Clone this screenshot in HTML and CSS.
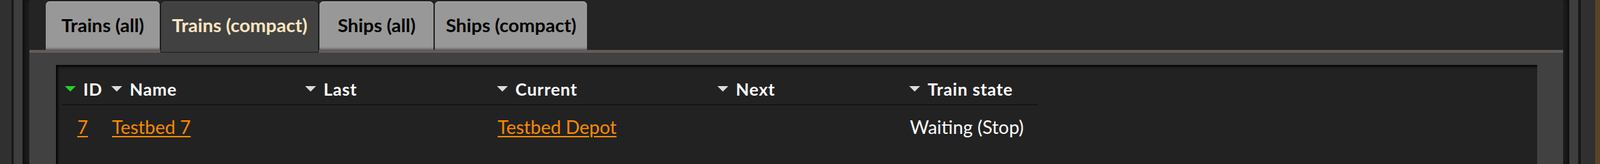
FILE: index.html
```html
<!DOCTYPE html>
<html lang="en">
<head>
<meta charset="utf-8">
<title>Trains (compact)</title>
<link rel="stylesheet" href="styles.css">
</head>
<body>
<div class="window">
  <div class="rail">
    <div class="content">
      <div class="pane">
        <div class="tabs">
          <div class="tab">Trains (all)</div>
          <div class="tab tab-active">Trains (compact)</div>
          <div class="tab">Ships (all)</div>
          <div class="tab">Ships (compact)</div>
        </div>
        <div class="panel">
          <div class="inner">
            <div class="table">
              <div class="th"><span class="arrow arrow-green"></span>ID</div>
              <div class="th"><span class="arrow"></span>Name</div>
              <div class="th"><span class="arrow"></span>Last</div>
              <div class="th"><span class="arrow"></span>Current</div>
              <div class="th"><span class="arrow"></span>Next</div>
              <div class="th"><span class="arrow"></span>Train state</div>

              <div class="td td-id"><a class="link" href="#">7</a></div>
              <div class="td"><a class="link" href="#">Testbed 7</a></div>
              <div class="td"></div>
              <div class="td"><a class="link" href="#">Testbed Depot</a></div>
              <div class="td"></div>
              <div class="td">Waiting (Stop)</div>
            </div>
          </div>
        </div>
      </div>
    </div>
  </div>
</div>
</body>
</html>
```
FILE: styles.css
```css
html, body {
  margin: 0;
  padding: 0;
  height: 100%;
  overflow: hidden;
  background: #303030;
}

.window {
  box-sizing: border-box;
  width: 2344px;
  height: 100%;
  min-height: 216px;
  display: flex;
  overflow: hidden;
  padding-left: 17px;
  padding-right: 21px;
  background: #303030;
  border-right: 7px solid #5a4326;
}

.rail {
  flex: 1;
  display: flex;
  padding: 0 13px;
  background: #3e3e3e;
  border-left: 3px solid #1b1714;
  border-right: 4px solid #1b1714;
}

.content {
  flex: 1;
  display: flex;
  padding: 0 9px 0 10px;
  background: #1d1d1d;
  box-shadow: inset 5px 0 5px -2px #0e0e0e, inset -5px 0 5px -2px #0e0e0e;
}

.pane {
  flex: 1;
  display: flex;
  flex-direction: column;
  background: #242424;
}

.tabs {
  box-sizing: border-box;
  height: 73px;
  flex: none;
  display: flex;
  align-items: flex-end;
  gap: 2px;
  padding-left: 24px;
}

.tab {
  box-sizing: border-box;
  height: 71px;
  min-width: 167px;
  padding: 0 16px 2px;
  display: flex;
  align-items: center;
  justify-content: center;
  font-family: Lato, "Liberation Sans", sans-serif;
  font-weight: 700;
  font-size: 27.5px;
  white-space: nowrap;
  color: #000;
  background: #989898;
  border-radius: 6px 6px 0 0;
  box-shadow: inset 0 1px 0 #b3b3b3, inset 0 -4px 3px -2px rgba(0, 0, 0, 0.35);
}

.tab-active {
  position: relative;
  z-index: 1;
  height: 74px;
  margin-bottom: -3px;
  padding-bottom: 5px;
  color: #ffe6c0;
  background: #414141;
  box-shadow: inset 0 1px 0 #4f4f4f, 0 0 0 1px #1c1c1c;
}

.panel {
  flex: 1;
  display: flex;
  padding: 19px 38px 0 39px;
  background: #414141;
  border-top: 3px solid #605a57;
  box-shadow: inset 0 1px 0 #6c6562;
}

.inner {
  flex: 1;
  padding: 20px 0 0 9px;
  background: #222222;
  box-shadow: inset 3px 3px 3px #080808;
}

.table {
  display: grid;
  grid-template-columns: 68px 284px 281px 323px 281px 192px;
  width: max-content;
}

.th {
  display: flex;
  align-items: center;
  gap: 11px;
  height: 30px;
  padding: 0 0 8px 4px;
  border-bottom: 1px solid #0b0b0b;
  font-family: Lato, "Liberation Sans", sans-serif;
  font-weight: 700;
  font-size: 25px;
  line-height: 30px;
  letter-spacing: 0.8px;
  white-space: nowrap;
  color: #ffffff;
}

.arrow {
  width: 0;
  height: 0;
  border-left: 8px solid transparent;
  border-right: 8px solid transparent;
  border-top: 8px solid #dcdcdc;
}

.arrow-green {
  border-top-color: #22d422;
}

.td {
  padding: 16px 0 0 5px;
  height: 32px;
  font-family: Lato, "Liberation Sans", sans-serif;
  font-weight: 400;
  font-size: 27px;
  line-height: 32px;
  white-space: nowrap;
  color: #ffffff;
}

.td-id {
  padding-left: 4px;
  padding-right: 12px;
  text-align: center;
}

.link {
  color: #ff8a00;
  text-decoration: underline;
  text-decoration-thickness: 2px;
  text-underline-offset: 3px;
}
```
